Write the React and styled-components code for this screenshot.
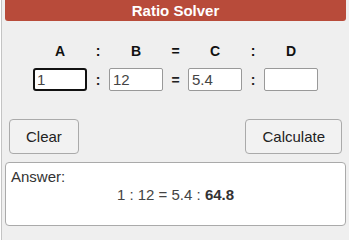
import React, { useState } from "react";
import styled, { createGlobalStyle } from "styled-components";

const GlobalStyle = createGlobalStyle`
  html, body {
    margin: 0;
    padding: 0;
    background: #ffffff;
  }
  body {
    font-family: "Liberation Sans", Arial, sans-serif;
  }
`;

const Panel = styled.div`
  margin-left: 1px;
  border-left: 1px solid #c4c4c4;
  background: #efefef;
  padding: 0 3px;
  height: 240px;
  box-sizing: border-box;
`;

const Header = styled.div`
  height: 21px;
  line-height: 21px;
  background: #b84b3a;
  color: #ffffff;
  font-size: 15px;
  font-weight: bold;
  text-align: center;
  border-radius: 0 0 3px 3px;
`;

const Grid = styled.div`
  display: grid;
  grid-template-columns: 54px 22px 54px 25px 54px 22px 54px;
  justify-content: center;
  align-items: center;
  margin-top: ${(p) => p.$top}px;
`;

const Label = styled.div`
  text-align: center;
  font-size: 14px;
  font-weight: bold;
  color: #111;
  height: 16px;
  line-height: 16px;
`;

const Sep = styled.div`
  text-align: center;
  font-size: 14px;
  font-weight: bold;
  color: #222;
`;

const Field = styled.input`
  width: 54px;
  height: 23px;
  box-sizing: border-box;
  border: ${(p) => (p.$active ? "2px solid #111" : "1px solid #999")};
  border-radius: ${(p) => (p.$active ? "3px" : "2px")};
  padding: 0 ${(p) => (p.$active ? "2px" : "3px")};
  font-family: "Liberation Sans", Arial, sans-serif;
  font-size: 15px;
  color: #444;
  background: #fff;
  outline: none;
`;

const ButtonRow = styled.div`
  display: flex;
  justify-content: space-between;
  padding: 0 4px;
  margin-top: 28px;
`;

const Button = styled.button`
  height: 35px;
  padding: 0 16px;
  border: 1px solid #aaa;
  border-radius: 4px;
  background: #f2f2f2;
  color: #222;
  font-family: "Liberation Sans", Arial, sans-serif;
  font-size: 15px;
`;

const AnswerBox = styled.div`
  margin-top: 8px;
  height: 64px;
  box-sizing: border-box;
  background: #fff;
  border: 1px solid #aaa;
  border-radius: 4px;
  padding: 5px 5px;
  font-size: 15px;
  line-height: 18px;
`;

const AnswerTitle = styled.div`
  color: #333;
`;

const Result = styled.div`
  text-align: center;
  color: #444;

  b {
    color: #333;
  }
`;

export default function App() {
  const [vals, setVals] = useState(["1", "12", "5.4", ""]);
  const set = (i) => (e) => {
    const next = [...vals];
    next[i] = e.target.value;
    setVals(next);
  };

  return (
    <>
      <GlobalStyle />
      <Panel>
        <Header>Ratio Solver</Header>
        <Grid $top={22}>
          <Label>A</Label>
          <Label>:</Label>
          <Label>B</Label>
          <Label>=</Label>
          <Label>C</Label>
          <Label>:</Label>
          <Label>D</Label>
        </Grid>
        <Grid $top={9}>
          <Field $active value={vals[0]} onChange={set(0)} />
          <Sep>:</Sep>
          <Field value={vals[1]} onChange={set(1)} />
          <Sep>=</Sep>
          <Field value={vals[2]} onChange={set(2)} />
          <Sep>:</Sep>
          <Field value={vals[3]} onChange={set(3)} />
        </Grid>
        <ButtonRow>
          <Button>Clear</Button>
          <Button>Calculate</Button>
        </ButtonRow>
        <AnswerBox>
          <AnswerTitle>Answer:</AnswerTitle>
          <Result>
            1 : 12 = 5.4 : <b>64.8</b>
          </Result>
        </AnswerBox>
      </Panel>
    </>
  );
}
